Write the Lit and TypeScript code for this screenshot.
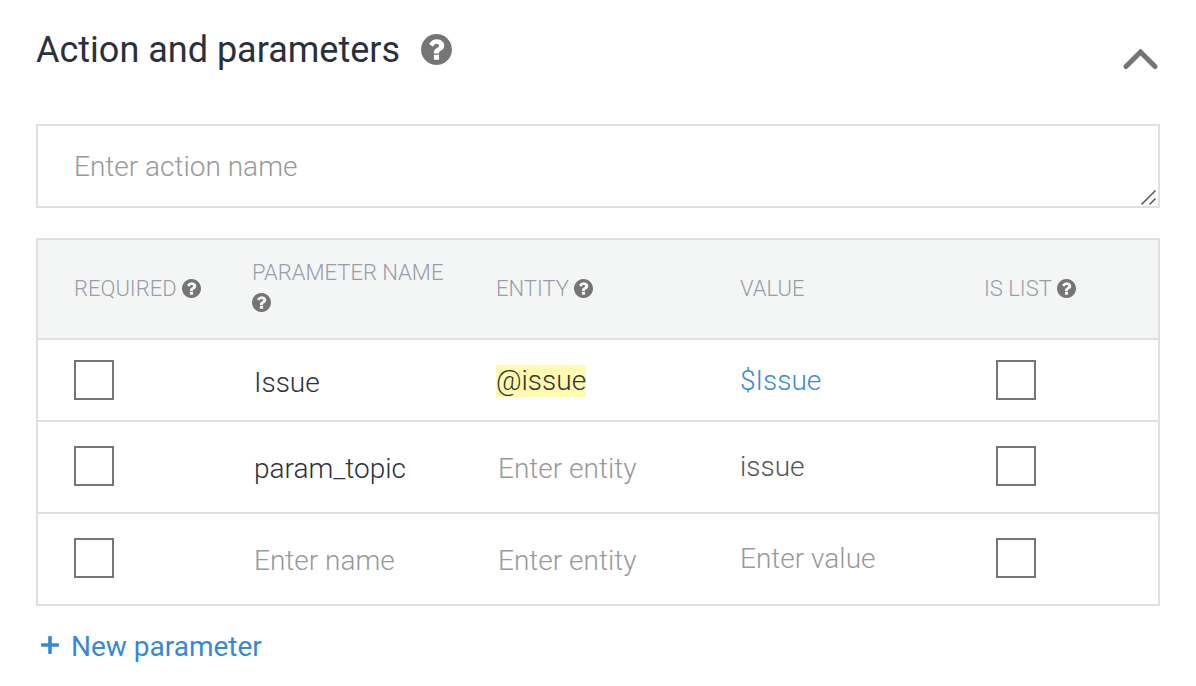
import { LitElement, html, css, svg, nothing } from "lit";
import { customElement, property, state } from "lit/decorators.js";

interface Parameter {
  name: string;
  entity: string;
  value: string;
}

@customElement("help-button")
class HelpButton extends LitElement {
  @property() topic = "";

  static styles = css`
    :host {
      display: inline-block;
      width: 19px;
      height: 19px;
    }
    .help {
      display: block;
      width: 100%;
      height: 100%;
      padding: 0;
      border: 0;
      background: none;
      color: #757575;
      cursor: pointer;
    }
    .glyph {
      display: block;
      width: 100%;
      height: 100%;
    }
  `;

  render() {
    return html`<button class="help" type="button" aria-label="Help: ${this.topic}">
      <svg class="glyph" viewBox="128 128 1536 1536" fill="currentColor" aria-hidden="true">
        <path
          d="M1024 1376v-192q0-14-9-23t-23-9h-192q-14 0-23 9t-9 23v192q0 14 9 23t23 9h192q14 0 23-9t9-23zm256-672q0-88-55.5-163t-138.5-116-170-41q-243 0-371 213-15 24 8 42l132 100q7 6 19 6 16 0 25-12 53-68 86-92 34-24 86-24 48 0 85.5 26t37.5 59q0 38-20 61t-68 45q-63 28-115.5 86.5t-52.500 125.500v36q0 14 9 23t23 9h192q14 0 23-9t9-23q0-19 21.500-49.500t54.500-49.500q32-18 49-28.500t46-35 44.500-48 28-60.500 12.500-81zm384 192q0 209-103 385.500t-279.500 279.500-385.500 103-385.500-103-279.500-279.500-103-385.500 103-385.500 279.500-279.500 385.500-103 385.500 103 279.500 279.500 103 385.500z"
        />
      </svg>
    </button>`;
  }
}

@customElement("app-root")
class AppRoot extends LitElement {
  @state() private open = true;
  @state() private parameters: Parameter[] = [
    { name: "Issue", entity: "@issue", value: "$Issue" },
    { name: "param_topic", entity: "", value: "issue" },
    { name: "", entity: "", value: "" },
  ];

  static styles = css`
    :host {
      display: block;
      padding: 28px 36px 20px;
      background: #fff;
      color: #2b303b;
      font-family: Roboto, sans-serif;
      font-size: 28px;
      font-weight: 300;
      line-height: 32px;
    }
    * {
      box-sizing: border-box;
    }
    button,
    input,
    textarea {
      margin: 0;
      border: 0;
      border-radius: 0;
      background: none;
      color: inherit;
      font: inherit;
    }
    .head {
      display: flex;
      align-items: flex-start;
      height: 96px;
    }
    .title {
      margin: 0 21px 0 0;
      font-size: 36px;
      font-weight: 400;
      line-height: 44px;
    }
    .title-help {
      width: 31px;
      height: 31px;
      margin-top: 6px;
    }
    .toggle {
      margin: 20px 0 0 auto;
      padding: 0 2px;
      cursor: pointer;
    }
    .toggle svg {
      display: block;
    }
    .action {
      position: relative;
      margin-bottom: 30px;
    }
    .action-name {
      display: block;
      width: 100%;
      height: 84px;
      padding: 25px 36px 23px;
      border: 2px solid #e0e0e0;
      resize: none;
      overflow: hidden;
    }
    .grip {
      position: absolute;
      right: 3px;
      bottom: 2px;
      pointer-events: none;
    }
    ::placeholder {
      color: #999;
      opacity: 1;
    }
    .frame {
      border: 2px solid #dfe1e1;
    }
    .params {
      width: 100%;
      table-layout: fixed;
      border-collapse: separate;
      border-spacing: 0;
    }
    .col-required {
      width: 214px;
    }
    .col-list {
      width: 174px;
    }
    th,
    td {
      padding: 0;
      text-align: left;
      font-weight: 300;
    }
    th {
      height: 98px;
      background: #f4f6f5;
      color: #9a9cab;
      font-size: 22px;
      line-height: 30px;
      vertical-align: middle;
    }
    th:first-child,
    td:first-child {
      padding-left: 36px;
    }
    .heading {
      display: flex;
      flex-wrap: wrap;
      align-items: center;
      column-gap: 5px;
    }
    .heading help-button {
      margin-bottom: 2px;
    }
    .wrapped {
      padding: 0 40px 8px 0;
    }
    .wrapped help-button {
      display: block;
      margin-top: 5px;
    }
    td {
      height: 92px;
      border-top: 2px solid #dfe1e1;
      vertical-align: middle;
    }
    .filled td {
      height: 82px;
    }
    .filled .text-cell {
      padding-top: 2px;
    }
    .field {
      display: block;
      width: 100%;
      padding: 4px 2px 0;
    }
    .value {
      padding: 0;
      color: #555;
    }
    .reference {
      color: #3a8ad8;
    }
    .entity {
      display: block;
      padding: 0;
      background: #fffab0;
      color: #333;
      cursor: text;
    }
    .check {
      display: block;
      width: 40px;
      height: 40px;
      margin-bottom: 2px;
      border: 2px solid #757575;
      background: #fff;
      appearance: none;
    }
    .filled .check {
      margin-bottom: 0;
    }
    .check:checked {
      box-shadow: inset 0 0 0 6px #fff;
      background: #757575;
    }
    .list-check {
      margin-left: 12px;
    }
    .add {
      display: flex;
      align-items: center;
      gap: 12px;
      margin-top: 25px;
      padding: 0 0 0 5px;
      color: #3788d8;
      font-weight: 400;
      cursor: pointer;
    }
    .plus {
      margin-bottom: 5px;
    }
  `;

  private toggle() {
    this.open = !this.open;
  }

  private addParameter() {
    this.parameters = [...this.parameters, { name: "", entity: "", value: "" }];
  }

  private renderRow(p: Parameter, i: number) {
    const row = i + 1;
    return html`<tr class=${p.entity ? "filled" : ""}>
      <td><input class="check" type="checkbox" aria-label="Required, row ${row}" /></td>
      <td class="text-cell">
        <input class="field" type="text" placeholder="Enter name" aria-label="Parameter name, row ${row}" .value=${p.name} />
      </td>
      <td class="text-cell">
        ${p.entity
          ? html`<button class="entity" type="button">${p.entity}</button>`
          : html`<input class="field" type="text" placeholder="Enter entity" aria-label="Entity, row ${row}" />`}
      </td>
      <td class="text-cell">
        <input
          class="field value ${p.value.startsWith("$") ? "reference" : ""}"
          type="text"
          placeholder="Enter value"
          aria-label="Value, row ${row}"
          .value=${p.value}
        />
      </td>
      <td><input class="check list-check" type="checkbox" aria-label="Is list, row ${row}" /></td>
    </tr>`;
  }

  private renderBody() {
    return html`
      <div class="action">
        <textarea class="action-name" rows="1" placeholder="Enter action name" aria-label="Action name"></textarea>
        <svg class="grip" width="17" height="17" viewBox="0 0 17 17" stroke="#555" stroke-width="1.5" aria-hidden="true">
          <path d="M1.5 15.5l14-14M9.5 15.5l6-6" fill="none" />
        </svg>
      </div>
      <div class="frame">
        <table class="params">
          <colgroup>
            <col class="col-required" />
            <col />
            <col />
            <col />
            <col class="col-list" />
          </colgroup>
          <thead>
            <tr>
              <th scope="col"><div class="heading">REQUIRED <help-button topic="Required"></help-button></div></th>
              <th scope="col">
                <div class="wrapped">PARAMETER NAME <help-button topic="Parameter name"></help-button></div>
              </th>
              <th scope="col"><div class="heading">ENTITY <help-button topic="Entity"></help-button></div></th>
              <th scope="col">VALUE</th>
              <th scope="col"><div class="heading">IS LIST <help-button topic="Is list"></help-button></div></th>
            </tr>
          </thead>
          <tbody>
            ${this.parameters.map((p, i) => this.renderRow(p, i))}
          </tbody>
        </table>
      </div>
      <button class="add" type="button" @click=${this.addParameter}>
        <svg class="plus" width="18" height="18" viewBox="0 0 18 18" fill="currentColor" aria-hidden="true">
          <rect x="7.2" y="0" width="3.6" height="18" rx="1" />
          <rect x="0" y="7.2" width="18" height="3.6" rx="1" />
        </svg>
        New parameter
      </button>
    `;
  }

  render() {
    return html`
      <header class="head">
        <h2 class="title">Action and parameters</h2>
        <help-button class="title-help" topic="Action and parameters"></help-button>
        <button class="toggle" type="button" aria-label="Toggle section" aria-expanded=${this.open} @click=${this.toggle}>
          <svg width="35" height="22" viewBox="0 0 35 22" fill="none" stroke="#757575" stroke-width="5" stroke-linecap="round" aria-hidden="true">
            ${this.open
              ? svg`<path d="M3 18.500L17.500 4L32 18.500" />`
              : svg`<path d="M3 4L17.500 18.500L32 4" />`}
          </svg>
        </button>
      </header>
      ${this.open ? this.renderBody() : nothing}
    `;
  }
}
